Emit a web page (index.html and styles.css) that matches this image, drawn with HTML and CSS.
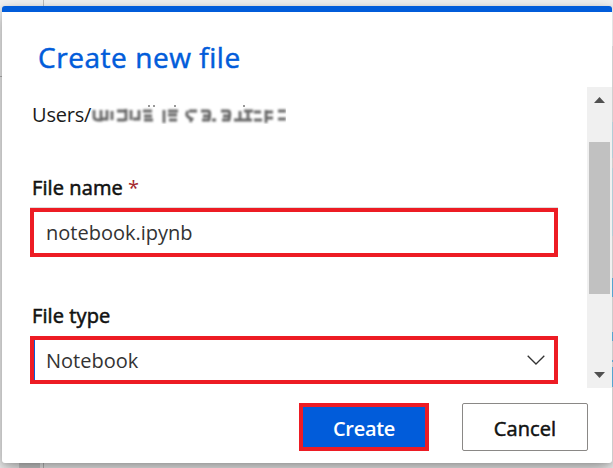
FILE: index.html
```
<!DOCTYPE html>
<html lang="en">
<head>
<meta charset="utf-8">
<title>Create new file</title>
<link rel="stylesheet" href="styles.css">
</head>
<body>
<div class="page">
  <div class="backdrop" aria-hidden="true"><i class="thumb"></i><i class="vline"></i><i class="hline"></i><i class="edge"></i></div>
  <main class="dialog">
    <header class="header"><h1 class="title">Create new file</h1></header>
    <div class="body">
      <div class="content">
        <div class="path"><span class="path-text">Users/</span>
          <svg class="redacted" width="195" height="20" viewBox="91 105 195 20" aria-hidden="true">
            <g class="smudge">
              <path d="M94 111v7q0 3 4 3h3v-10M101 120h6v-9M112 112v9M117 112h9M117 121h8M126 110v12M131 111v10M133 120h6v-9M143 112h9M144 117h8M144 121h9"/>
              <path d="M164 111v13M168 112h10M168 116h9M169 121h8M189 112h8M188 112q-4 5 4 8l-2 3M201 112h7q3 0 1 9h-7M203 117h6M212 121h4M221 112h7q3 0 1 9h-7M223 117h7M234 121h18M240 112v9M244 112h9M248 112v9M254 113h7M254 121h8M266 111v13M266 113h7M266 119h7M278 112h8M278 120h8"/>
            </g>
            <path class="specks" d="M148 107h2M153 107h2M174 107h2M243 107h2"/>
          </svg>
        </div>
        <label class="label name-label"><span class="name-text">File name</span><span class="star">*</span></label>
        <div class="field input"><span class="input-text">notebook.ipynb</span></div>
        <label class="label type-label"><span class="type-text">File type</span></label>
        <div class="field select"><span class="select-text">Notebook</span>
          <svg class="chevron" width="18" height="10" viewBox="0 0 18 10"><path d="M.7.7 9 9 17.3.7"/></svg>
        </div>
      </div>
      <div class="scrollbar">
        <svg width="11" height="6" viewBox="0 0 11 6"><path d="M0 6 5.5 0 11 6z"/></svg>
        <i class="scroll-thumb"></i>
        <svg width="11" height="6" viewBox="0 0 11 6"><path d="M0 0h11L5.500 6z"/></svg>
      </div>
    </div>
    <footer class="footer">
      <button class="button create"><span class="create-text">Create</span></button>
      <button class="button cancel"><span class="cancel-text">Cancel</span></button>
    </footer>
  </main>
</div>
</body>
</html>
```
FILE: styles.css
```
* { box-sizing: border-box; }
body { margin: 0; font-family: "Open Sans", "Noto Sans", sans-serif; font-size: 20px; color: #1b1b1b; }
.page { position: relative; width: 613px; height: 468px; padding: 6px 1px 5px 2px; overflow: hidden; background: #f2f2f2; }
.backdrop i { position: absolute; }
.vline { left: 43px; top: 0; width: 1px; height: 468px; background: #bcbcbc; }
.hline { left: 0; top: 76px; width: 2px; height: 1px; background: #b8b8b8; }
.thumb { left: 19px; top: 463px; width: 21px; height: 5px; background: #d0d0d0; }
.backdrop .edge { z-index: 1; right: 0; top: 6px; width: 1px; height: 457px; background: linear-gradient(#e4e4e4 0 40px, #d0d0d0 40px 116px, #b2cdd6 116px 152px, #cccccc 152px 162px, #b2cdd6 162px 230px, #ccc 230px 272px, #55a5cf 272px 291px, #ccc 291px 326px, #55a5cf 326px 335px, #ccc 335px 354px, #55a5cf 354px 356px, #ccc 356px 361px, #55a5cf 361px 381px, #ccc 381px); }
.dialog { position: relative; display: flex; flex-direction: column; width: 610px; height: 457px; border-top: 6px solid #015cda; border-radius: 3px; background: #fff; box-shadow: 0 7px 18px rgba(0,0,0,.36), 0 1px 4px rgba(0,0,0,.1); }
.header { height: 75px; padding: 25px 0 0 36px; }
.title { margin: 0; font-size: 28px; font-weight: 400; line-height: 40px; letter-spacing: .55px; -webkit-text-stroke: .5px #015cda; color: #015cda; }
.body { display: flex; height: 301px; }
.content { width: 585px; padding: 14px 29px 0 28px; }
.path { display: flex; height: 28px; line-height: 28px; padding-left: 2px; }
.path-text { letter-spacing: -.2px; }
.redacted { display: block; margin: 3px 0 0; }
.smudge { fill: none; stroke: #666; stroke-width: 2.8; filter: blur(1.2px); }
.specks { stroke: #333; stroke-width: 1; }
.label { display: flex; height: 28px; line-height: 28px; padding-left: 2px; letter-spacing: .1px; -webkit-text-stroke: .55px #111; color: #111; }
.name-label { margin-top: 45px; }
.star { margin-left: 5px; -webkit-text-stroke: 0; color: #a4262c; }
.type-label { margin-top: 45px; }
.field { display: flex; align-items: center; border: 4px solid #ed1c24; width: 528px; padding-left: 12px; color: #333; }
.input { height: 49px; margin-top: 6px; box-shadow: 0 -1px 0 #ddd; }
.select { height: 48px; margin-top: 6px; justify-content: space-between; padding: 0 9px 0 12px; box-shadow: inset 1px 0 #015cda; }
.chevron { fill: none; stroke: #333; stroke-width: 1.3; }
.scrollbar { display: flex; flex-direction: column; align-items: center; width: 25px; padding-top: 10px; background: #f0f0f0; fill: #505050; }
.scroll-thumb { width: 21px; height: 152px; margin: 39px 0 78px; background: #c1c1c1; }
.scrollbar svg { flex: none; }
.footer { display: flex; gap: 33px; padding: 15px 0 0 297px; }
.button { height: 48px; padding: 2px 0 0; font: 600 20px "Open Sans", "Noto Sans", sans-serif; letter-spacing: -.3px; }
.create { width: 130px; border: 4px solid #ed1c24; background: #015cda; color: #fff; }
.cancel { width: 126px; border: 1px solid #8a8886; border-radius: 2px; background: #fff; color: #111; font-weight: 400; letter-spacing: .1px; -webkit-text-stroke: .5px #111; }
```
